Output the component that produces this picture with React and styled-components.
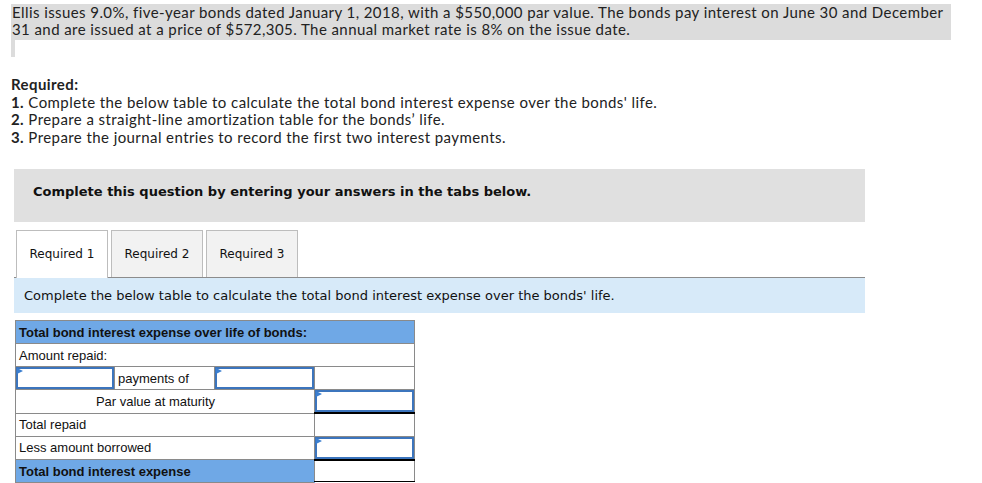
import React from "react";
import styled, { createGlobalStyle } from "styled-components";

const Global = createGlobalStyle`
  html, body { margin: 0; padding: 0; background: #fff; }
  body { font-family: Lato, "Open Sans", sans-serif; color: #1a1a1a; }
`;

const Page = styled.div`
  padding: 4px 0 0 11px;
  width: 982px;
  box-sizing: border-box;
`;

const Problem = styled.div`
  width: 940px;
  background: #dcdcdc;
  font-family: Lato, sans-serif;
  font-size: 15px;
  letter-spacing: 0.42px;
  line-height: 17px;
  padding: 0 0 2px 1px;
  box-sizing: border-box;
  color: #222;
`;

const Stub = styled.div`
  width: 4px;
  height: 17px;
  background: #dcdcdc;
`;

const Required = styled.div`
  margin-top: 19px;
  font-family: Lato, sans-serif;
  font-size: 15px;
  letter-spacing: 0.42px;
  line-height: 17.5px;
  color: #222;
  b { font-weight: 700; }
`;

const Item = styled.div``;

const Instruct = styled.div`
  margin: 23px 0 0 3px;
  width: 851px;
  height: 53px;
  background: #e0e0e0;
  padding: 15px 0 0 19px;
  box-sizing: border-box;
  font-family: Verdana, "DejaVu Sans", sans-serif;
  font-weight: 700;
  font-size: 13px;
  line-height: 16px;
  color: #111;
`;

const TabBar = styled.div`
  margin: 8px 0 0 3px;
  width: 851px;
  display: flex;
  gap: 3px;
  padding-left: 2px;
  box-sizing: border-box;
  border-bottom: 1px solid #8c8c8c;
`;

const Tab = styled.div`
  width: 92px;
  box-sizing: border-box;
  border: 1px solid #bdbdbd;
  border-bottom: none;
  background: ${(p) => (p.$active ? "#fff" : "#f2f2f2")};
  display: flex;
  align-items: center;
  justify-content: center;
  font-family: Verdana, "DejaVu Sans", sans-serif;
  font-size: 12px;
  color: #111;
  margin-bottom: ${(p) => (p.$active ? "-1px" : "0")};
  height: ${(p) => (p.$active ? "48px" : "47px")};
  padding-bottom: ${(p) => (p.$active ? "1px" : "0")};
`;

const InfoBand = styled.div`
  margin-left: 3px;
  width: 851px;
  height: 35px;
  background: #d7eaf9;
  display: flex;
  align-items: center;
  padding-left: 10px;
  box-sizing: border-box;
  font-family: Verdana, "DejaVu Sans", sans-serif;
  font-size: 13px;
  color: #111;
`;

const Table = styled.table`
  margin: 7px 0 0 4px;
  border-collapse: collapse;
  font-family: "Liberation Sans", Arial, sans-serif;
  font-size: 13px;
  color: #111;
  table-layout: fixed;
  width: 399px;
`;

const Td = styled.td`
  height: 23px;
  padding: 0 ${(p) => (p.$center ? "22px" : "0")} 0 3px;
  box-sizing: border-box;
  border: 1px solid #8a8a8a;
  background: ${(p) => (p.$head ? "#6fa8e6" : "#fff")};
  font-weight: ${(p) => (p.$head ? 700 : 400)};
  text-align: ${(p) => (p.$center ? "center" : "left")};
  vertical-align: middle;
  white-space: nowrap;
  border-bottom: ${(p) =>
    p.$double ? "3px double #000" : p.$black ? "2px solid #000" : "1px solid #8a8a8a"};
`;

const InputTd = styled.td`
  height: 23px;
  padding: 0;
  box-sizing: border-box;
  border: 1px solid #8a8a8a;
  border-bottom: ${(p) => (p.$black ? "2px solid #000" : "1px solid #8a8a8a")};
`;

const Field = styled.div`
  position: relative;
  height: 22px;
  box-sizing: border-box;
  border: 2px solid #3c75bd;
  background: #fff;
  &::before {
    content: "";
    position: absolute;
    left: -1px;
    top: -1px;
    border-left: 6px solid #3c7fd0;
    border-top: 3px solid transparent;
    border-bottom: 3px solid transparent;
  }
`;

export default function App() {
  return (
    <>
      <Global />
      <Page>
        <Problem>
          Ellis issues 9.0%, five-year bonds dated January 1, 2018, with a $550,000 par value. The bonds pay interest on June 30 and December 31 and are issued at a price of $572,305. The annual market rate is 8% on the issue date.
        </Problem>
        <Stub />
        <Required>
          <Item><b>Required:</b></Item>
          <Item><b>1.</b> Complete the below table to calculate the total bond interest expense over the bonds' life.</Item>
          <Item><b>2.</b> Prepare a straight-line amortization table for the bonds’ life.</Item>
          <Item><b>3.</b> Prepare the journal entries to record the first two interest payments.</Item>
        </Required>
        <Instruct>Complete this question by entering your answers in the tabs below.</Instruct>
        <TabBar>
          <Tab $active>Required 1</Tab>
          <Tab>Required 2</Tab>
          <Tab>Required 3</Tab>
        </TabBar>
        <InfoBand>Complete the below table to calculate the total bond interest expense over the bonds' life.</InfoBand>
        <Table>
          <colgroup>
            <col style={{ width: 99 }} />
            <col style={{ width: 100 }} />
            <col style={{ width: 100 }} />
            <col style={{ width: 100 }} />
          </colgroup>
          <tbody>
            <tr>
              <Td $head colSpan={4}>Total bond interest expense over life of bonds:</Td>
            </tr>
            <tr>
              <Td colSpan={4}>Amount repaid:</Td>
            </tr>
            <tr>
              <InputTd><Field /></InputTd>
              <Td>payments of</Td>
              <InputTd><Field /></InputTd>
              <Td />
            </tr>
            <tr>
              <Td colSpan={3} $center>Par value at maturity</Td>
              <InputTd $black><Field /></InputTd>
            </tr>
            <tr>
              <Td colSpan={3}>Total repaid</Td>
              <Td />
            </tr>
            <tr>
              <Td colSpan={3}>Less amount borrowed</Td>
              <InputTd $black><Field /></InputTd>
            </tr>
            <tr>
              <Td $head colSpan={3}>Total bond interest expense</Td>
              <Td $double />
            </tr>
          </tbody>
        </Table>
      </Page>
    </>
  );
}
